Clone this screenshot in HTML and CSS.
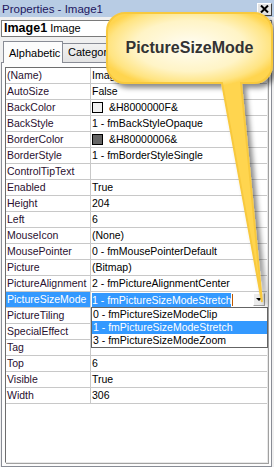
FILE: index.html
```html
<!DOCTYPE html>
<html lang="en">
<head>
    <meta charset="UTF-8">
    <meta name="viewport" content="width=device-width, initial-scale=1.0">
    <title>Properties - Image1</title>
    <link rel="stylesheet" href="styles.css">
</head>
<body>
    <div class="window">
        <!-- Title bar -->
        <div class="titlebar">
            <span class="title">Properties - Image1</span>
            <span class="close-btn">
                <svg width="9" height="8" viewBox="0 0 9 8">
                    <path d="M1 0.5 L8 7.5 M8 0.5 L1 7.5" stroke="#000" stroke-width="2"/>
                </svg>
            </span>
        </div>

        <!-- Object box -->
        <div class="object-box"><b>Image1</b> Image</div>

        <!-- Tabs -->
        <div class="tabs">
            <div class="tab active">Alphabetic</div>
            <div class="tab">Categorized</div>
        </div>

        <!-- Property grid -->
        <div class="panel">
            <div class="grid">
                <div class="row"><div class="name">(Name)</div><div class="value">Image1</div></div>
                <div class="row"><div class="name">AutoSize</div><div class="value">False</div></div>
                <div class="row"><div class="name">BackColor</div><div class="value"><span class="swatch light"></span>&amp;H8000000F&amp;</div></div>
                <div class="row"><div class="name">BackStyle</div><div class="value">1 - fmBackStyleOpaque</div></div>
                <div class="row"><div class="name">BorderColor</div><div class="value"><span class="swatch dark"></span>&amp;H80000006&amp;</div></div>
                <div class="row"><div class="name">BorderStyle</div><div class="value">1 - fmBorderStyleSingle</div></div>
                <div class="row"><div class="name">ControlTipText</div><div class="value"></div></div>
                <div class="row"><div class="name">Enabled</div><div class="value">True</div></div>
                <div class="row"><div class="name">Height</div><div class="value">204</div></div>
                <div class="row"><div class="name">Left</div><div class="value">6</div></div>
                <div class="row"><div class="name">MouseIcon</div><div class="value">(None)</div></div>
                <div class="row"><div class="name">MousePointer</div><div class="value">0 - fmMousePointerDefault</div></div>
                <div class="row"><div class="name">Picture</div><div class="value">(Bitmap)</div></div>
                <div class="row"><div class="name">PictureAlignment</div><div class="value">2 - fmPictureAlignmentCenter</div></div>
                <div class="row selected">
                    <div class="name">PictureSizeMode</div>
                    <div class="value editing">
                        <span class="sel-text">1 - fmPictureSizeModeStretch</span><span class="caret"></span>
                        <span class="drop-btn"><span class="arrow"></span></span>
                    </div>
                </div>
                <div class="row"><div class="name">PictureTiling</div><div class="value"></div></div>
                <div class="row"><div class="name">SpecialEffect</div><div class="value"></div></div>
                <div class="row"><div class="name">Tag</div><div class="value"></div></div>
                <div class="row"><div class="name">Top</div><div class="value">6</div></div>
                <div class="row"><div class="name">Visible</div><div class="value">True</div></div>
                <div class="row"><div class="name">Width</div><div class="value">306</div></div>

                <!-- open dropdown -->
                <div class="dropdown-list">
                    <div class="item">0 - fmPictureSizeModeClip</div>
                    <div class="item current">1 - fmPictureSizeModeStretch</div>
                    <div class="item">3 - fmPictureSizeModeZoom</div>
                </div>
            </div>
        </div>

        <!-- Callout -->
        <div class="callout">
            <svg width="274" height="312" viewBox="0 0 274 312">
                <defs>
                    <radialGradient id="calloutFill" gradientUnits="userSpaceOnUse" cx="190" cy="46" r="92"
                        gradientTransform="translate(190 46) scale(1 0.46) translate(-190 -46)">
                        <stop offset="0" stop-color="#fffdf4"/>
                        <stop offset="0.6" stop-color="#fff4c6"/>
                        <stop offset="0.88" stop-color="#ffe482"/>
                        <stop offset="1" stop-color="#ffd550"/>
                    </radialGradient>
                    <filter id="calloutShadow" x="-10%" y="-10%" width="130%" height="130%">
                        <feDropShadow dx="4" dy="4" stdDeviation="2.5" flood-color="#000" flood-opacity="0.45"/>
                    </filter>
                </defs>
                <path d="M125 13 H254 A18 18 0 0 1 272 31 V65 A18 18 0 0 1 254 83 H241 L262 302 L222 83 H125 A18 18 0 0 1 107 65 V31 A18 18 0 0 1 125 13 Z"
                    fill="url(#calloutFill)" stroke="#f8c93e" stroke-width="2" filter="url(#calloutShadow)"/>
            </svg>
            <div class="callout-text">PictureSizeMode</div>
        </div>
    </div>
</body>
</html>
```

FILE: styles.css
```css
/* General */
body {
    margin: 0;
    font-family: "Liberation Sans", Arial, sans-serif;
    background-color: #f0f0f0;
}

.window {
    position: relative;
    width: 274px;
    height: 467px;
    overflow: hidden;
    background-color: #f0f0f0;
}

/* Title bar */
.titlebar {
    height: 17px;
    background-color: #b8cce4;
    display: flex;
    align-items: center;
    justify-content: space-between;
    padding: 0 2px 0 2px;
}

.title {
    font-size: 11.5px;
    color: #221660;
}

.close-btn {
    width: 15px;
    height: 13px;
    box-sizing: border-box;
    background-color: #e4e4e4;
    border: 1px solid;
    border-color: #ffffff #404040 #404040 #ffffff;
    display: flex;
    align-items: center;
    justify-content: center;
    margin-top: 1px;
}

/* Object box */
.object-box {
    box-sizing: border-box;
    height: 17px;
    margin: 3px 2px 0 1px;
    background-color: #ffffff;
    border: 1px solid #7a7a7a;
    font-size: 11px;
    line-height: 15px;
    padding-left: 2px;
    color: #000;
}

.object-box b {
    font-size: 12.5px;
}

/* Tabs */
.tabs {
    display: flex;
    align-items: flex-end;
    height: 22px;
    margin-top: 3px;
    padding-left: 3px;
}

.tab {
    box-sizing: border-box;
    height: 19px;
    padding: 0 5px;
    font-size: 11px;
    line-height: 17px;
    color: #000;
    border: 1px solid #898c95;
    border-bottom: none;
    background: linear-gradient(#f2f2f2, #e3e3e3);
    margin-left: -1px;
}

.tab.active {
    height: 22px;
    width: 60px;
    line-height: 22px;
    background: #fcfcfc;
    position: relative;
    z-index: 1;
    margin-bottom: -1px;
    margin-left: 0;
}

/* Panel and grid */
.panel {
    box-sizing: border-box;
    height: 405px;
    margin: 0 2px 0 1px;
    border: 1px solid #898c95;
    background-color: #fcfcfc;
    padding: 4px 3px 3px 3px;
}

.grid {
    position: relative;
    box-sizing: border-box;
    height: 396px;
    background-color: #ffffff;
    border: 1px solid;
    border-color: #6d6d6d #e8e8e8 #e8e8e8 #6d6d6d;
    box-shadow: 1px 1px 0 #a0a0a0;
}

.row {
    display: grid;
    grid-template-columns: 85px 1fr;
    height: 16px;
    box-sizing: border-box;
    border-bottom: 1px solid #c8c8c8;
    font-size: 10.5px;
    line-height: 15px;
}

.name {
    border-right: 1px solid #c8c8c8;
    padding-left: 1px;
    color: #2a1030;
    white-space: nowrap;
    overflow: hidden;
}

.value {
    padding-left: 1px;
    color: #000;
    white-space: nowrap;
    overflow: hidden;
    display: flex;
    align-items: center;
}

.swatch {
    display: inline-block;
    width: 11px;
    height: 11px;
    box-sizing: border-box;
    border: 1px solid #000;
    margin-right: 6px;
}

.swatch.light {
    background-color: #f0f0f0;
}

.swatch.dark {
    background-color: #646464;
}

/* Selected row */
.row.selected .name {
    background-color: #3399ff;
    color: #ffffff;
}

.sel-text {
    background-color: #3399ff;
    color: #ffffff;
    line-height: 14px;
}

.caret {
    display: inline-block;
    width: 1px;
    height: 12px;
    background-color: #c05a00;
    margin-left: 1px;
}

.drop-btn {
    margin-left: auto;
    margin-right: 2px;
    width: 12px;
    height: 13px;
    box-sizing: border-box;
    background-color: #ececec;
    border: 1px solid;
    border-color: #ffffff #a0a0a0 #a0a0a0 #ffffff;
    display: flex;
    align-items: center;
    justify-content: center;
}

.arrow {
    width: 0;
    height: 0;
    border-left: 3px solid transparent;
    border-right: 3px solid transparent;
    border-top: 3px solid #000;
}

/* Dropdown list */
.dropdown-list {
    position: absolute;
    top: 239px;
    left: 85px;
    width: 177px;
    box-sizing: border-box;
    background-color: #ffffff;
    border: 1px solid #646464;
    font-size: 10.5px;
}

.dropdown-list .item {
    height: 13px;
    line-height: 13px;
    padding-left: 1px;
    color: #000;
    white-space: nowrap;
}

.dropdown-list .item.current {
    background-color: #3399ff;
    color: #ffffff;
}

/* Callout */
.callout {
    position: absolute;
    left: 0;
    top: 0;
    width: 274px;
    height: 312px;
    z-index: 5;
    pointer-events: none;
}

.callout svg {
    display: block;
}

.callout-text {
    position: absolute;
    left: 107px;
    top: 13px;
    width: 165px;
    height: 70px;
    display: flex;
    align-items: center;
    justify-content: center;
    font-size: 16px;
    font-weight: bold;
    color: #333333;
}
```
